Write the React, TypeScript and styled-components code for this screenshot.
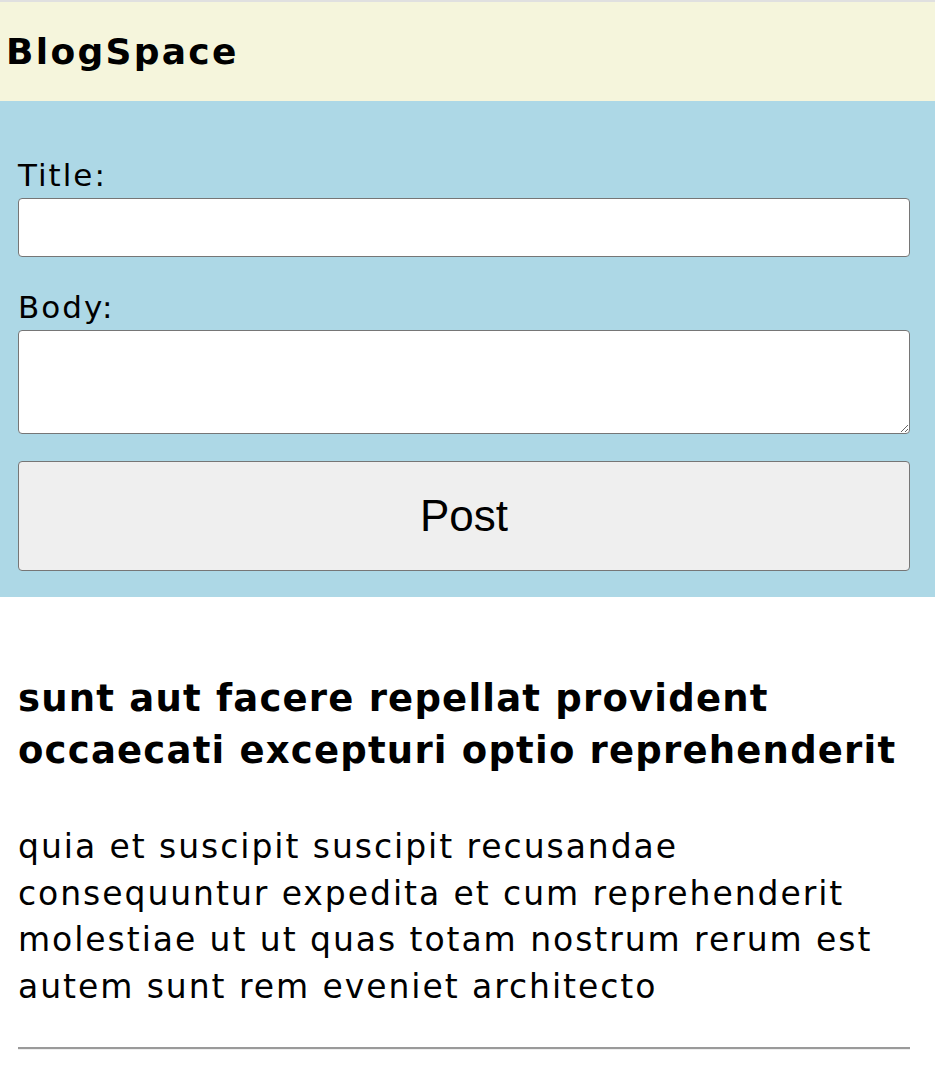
import React from "react";
import styled, { createGlobalStyle } from "styled-components";

const GlobalStyle = createGlobalStyle`
  html, body {
    margin: 0;
    padding: 0;
    background: #ffffff;
  }
  body {
    font-family: "DejaVu Sans", "Liberation Sans", sans-serif;
    color: #000;
  }
`;

const Header = styled.header`
  box-sizing: border-box;
  height: 101px;
  background: #f5f5dc;
  border-top: 2px solid #e0e0e0;
  display: flex;
  align-items: center;
  padding: 0 6px;
`;

const Logo = styled.h1`
  margin: 0;
  font-size: 36px;
  font-weight: 700;
  letter-spacing: 2.3px;
`;

const Form = styled.form`
  background: #add8e6;
  padding: 54px 25px 26px 18px;
  display: flex;
  flex-direction: column;
`;

const Label = styled.label`
  font-size: 31px;
  line-height: 40px;
  letter-spacing: 2px;
  margin-bottom: 3px;
`;

const TextInput = styled.input`
  box-sizing: border-box;
  height: 59px;
  border: 1px solid #767676;
  border-radius: 4px;
  background: #fff;
  margin-bottom: 30px;
  font-size: 24px;
`;

const TextArea = styled.textarea`
  box-sizing: border-box;
  height: 104px;
  border: 1px solid #767676;
  border-radius: 4px;
  background: #fff;
  margin-bottom: 27px;
  font-size: 24px;
`;

const PostButton = styled.button`
  box-sizing: border-box;
  height: 110px;
  border: 1px solid #767676;
  border-radius: 4px;
  background: #efefef;
  font-family: "Liberation Sans", Arial, sans-serif;
  font-size: 44px;
  color: #000;
`;

const Post = styled.article`
  padding: 76px 25px 0 18px;
`;

const PostTitle = styled.h2`
  margin: 0 0 47px;
  font-size: 37px;
  line-height: 52px;
  font-weight: 700;
  letter-spacing: 1.2px;
`;

const PostBody = styled.p`
  margin: 0 0 37px;
  font-size: 33px;
  line-height: 46.5px;
  letter-spacing: 1.95px;
`;

const Divider = styled.hr`
  margin: 0;
  border: none;
  border-top: 2px solid #9a9a9a;
  border-bottom: 1px solid #eeeeee;
`;

export default function App() {
  return (
    <>
      <GlobalStyle />
      <Header>
        <Logo>BlogSpace</Logo>
      </Header>
      <Form onSubmit={e => e.preventDefault()}>
        <Label htmlFor="post-title">Title:</Label>
        <TextInput id="post-title" type="text" />
        <Label htmlFor="post-body">Body:</Label>
        <TextArea id="post-body" />
        <PostButton type="submit">Post</PostButton>
      </Form>
      <Post>
        <PostTitle>sunt aut facere repellat provident occaecati excepturi optio reprehenderit</PostTitle>
        <PostBody>
          quia et suscipit suscipit recusandae consequuntur expedita et cum reprehenderit molestiae ut ut quas totam
          nostrum rerum est autem sunt rem eveniet architecto
        </PostBody>
        <Divider />
      </Post>
    </>
  );
}
